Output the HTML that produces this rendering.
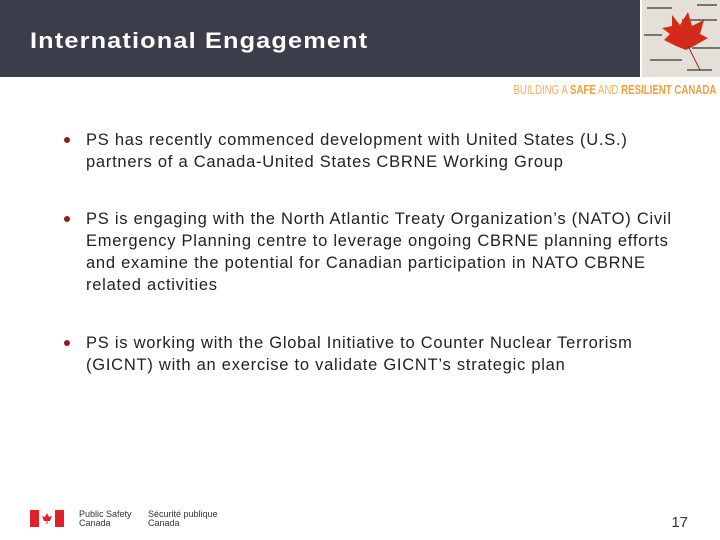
<!DOCTYPE html>
<html><head><style>
body{margin:0;width:720px;height:540px;position:relative;background:#fff;font-family:"Liberation Sans",Arial,sans-serif;overflow:hidden}
.hdr{position:absolute;left:0;top:0;width:640px;height:77px;background:#3b3d4a}
.hdr h1{position:absolute;left:30px;top:28px;margin:0;color:#fff;font-size:22px;font-weight:bold;letter-spacing:1px;transform:scaleX(1.15);transform-origin:left;white-space:nowrap}
.img{position:absolute;left:642px;top:0;width:78px;height:77px;background:#e4e0d8}
.tag{position:absolute;right:4px;top:82px;font-size:13px;color:#f0b060;white-space:nowrap;transform:scaleX(0.745);transform-origin:right}
.tag b{color:#eea040}
.p{position:absolute;left:86px;font-size:16.5px;line-height:22px;color:#222;white-space:nowrap;letter-spacing:0.75px}
.dot{position:absolute;left:64px;width:6px;height:6px;border-radius:50%;background:#8b2020}
.foot{position:absolute;top:510px;font-size:9px;line-height:9px;color:#333}
.num{position:absolute;right:32px;top:514px;font-size:15px;color:#333}
</style></head><body>
<div class="hdr"><h1>International Engagement</h1></div>
<div class="img">
<svg width="78" height="77">
<g stroke="#333" stroke-width="1.2"><line x1="5" y1="8" x2="30" y2="8"/><line x1="40" y1="20" x2="75" y2="20"/><line x1="2" y1="35" x2="20" y2="35"/><line x1="50" y1="48" x2="78" y2="48"/><line x1="8" y1="60" x2="40" y2="60"/><line x1="45" y1="70" x2="70" y2="70"/><line x1="55" y1="5" x2="75" y2="5"/></g>
<path d="M30 15 L38 25 L46 12 L50 26 L62 20 L58 34 L66 38 L52 46 L44 50 L34 46 L22 40 L28 34 L20 28 L30 26 Z" fill="#d42a1a"/>
<line x1="46" y1="46" x2="58" y2="70" stroke="#a02018" stroke-width="1"/>
</svg></div>
<div class="tag">BUILDING A <b>SAFE</b> AND <b>RESILIENT CANADA</b></div>
<div class="dot" style="top:137px"></div>
<div class="p" style="top:129px">PS has recently commenced development with United States (U.S.)<br>partners of a Canada-United States CBRNE Working Group</div>
<div class="dot" style="top:216px"></div>
<div class="p" style="top:208px">PS is engaging with the North Atlantic Treaty Organization’s (NATO) Civil<br>Emergency Planning centre to leverage ongoing CBRNE planning efforts<br>and examine the potential for Canadian participation in NATO CBRNE<br>related activities</div>
<div class="dot" style="top:340px"></div>
<div class="p" style="top:332px">PS is working with the Global Initiative to Counter Nuclear Terrorism<br>(GICNT) with an exercise to validate GICNT’s strategic plan</div>
<svg style="position:absolute;left:30px;top:510px" width="34" height="17"><rect width="9" height="17" fill="#e0202a"/><rect x="25" width="9" height="17" fill="#e0202a"/><path d="M17 3 L19 7 L22 6 L20 11 L17.5 11 L17.5 14 L16.5 14 L16.5 11 L14 11 L12 6 L15 7 Z" fill="#e0202a"/></svg>
<div class="foot" style="left:79px">Public Safety<br>Canada</div>
<div class="foot" style="left:148px">Sécurité publique<br>Canada</div>
<div class="num">17</div>
</body></html>
